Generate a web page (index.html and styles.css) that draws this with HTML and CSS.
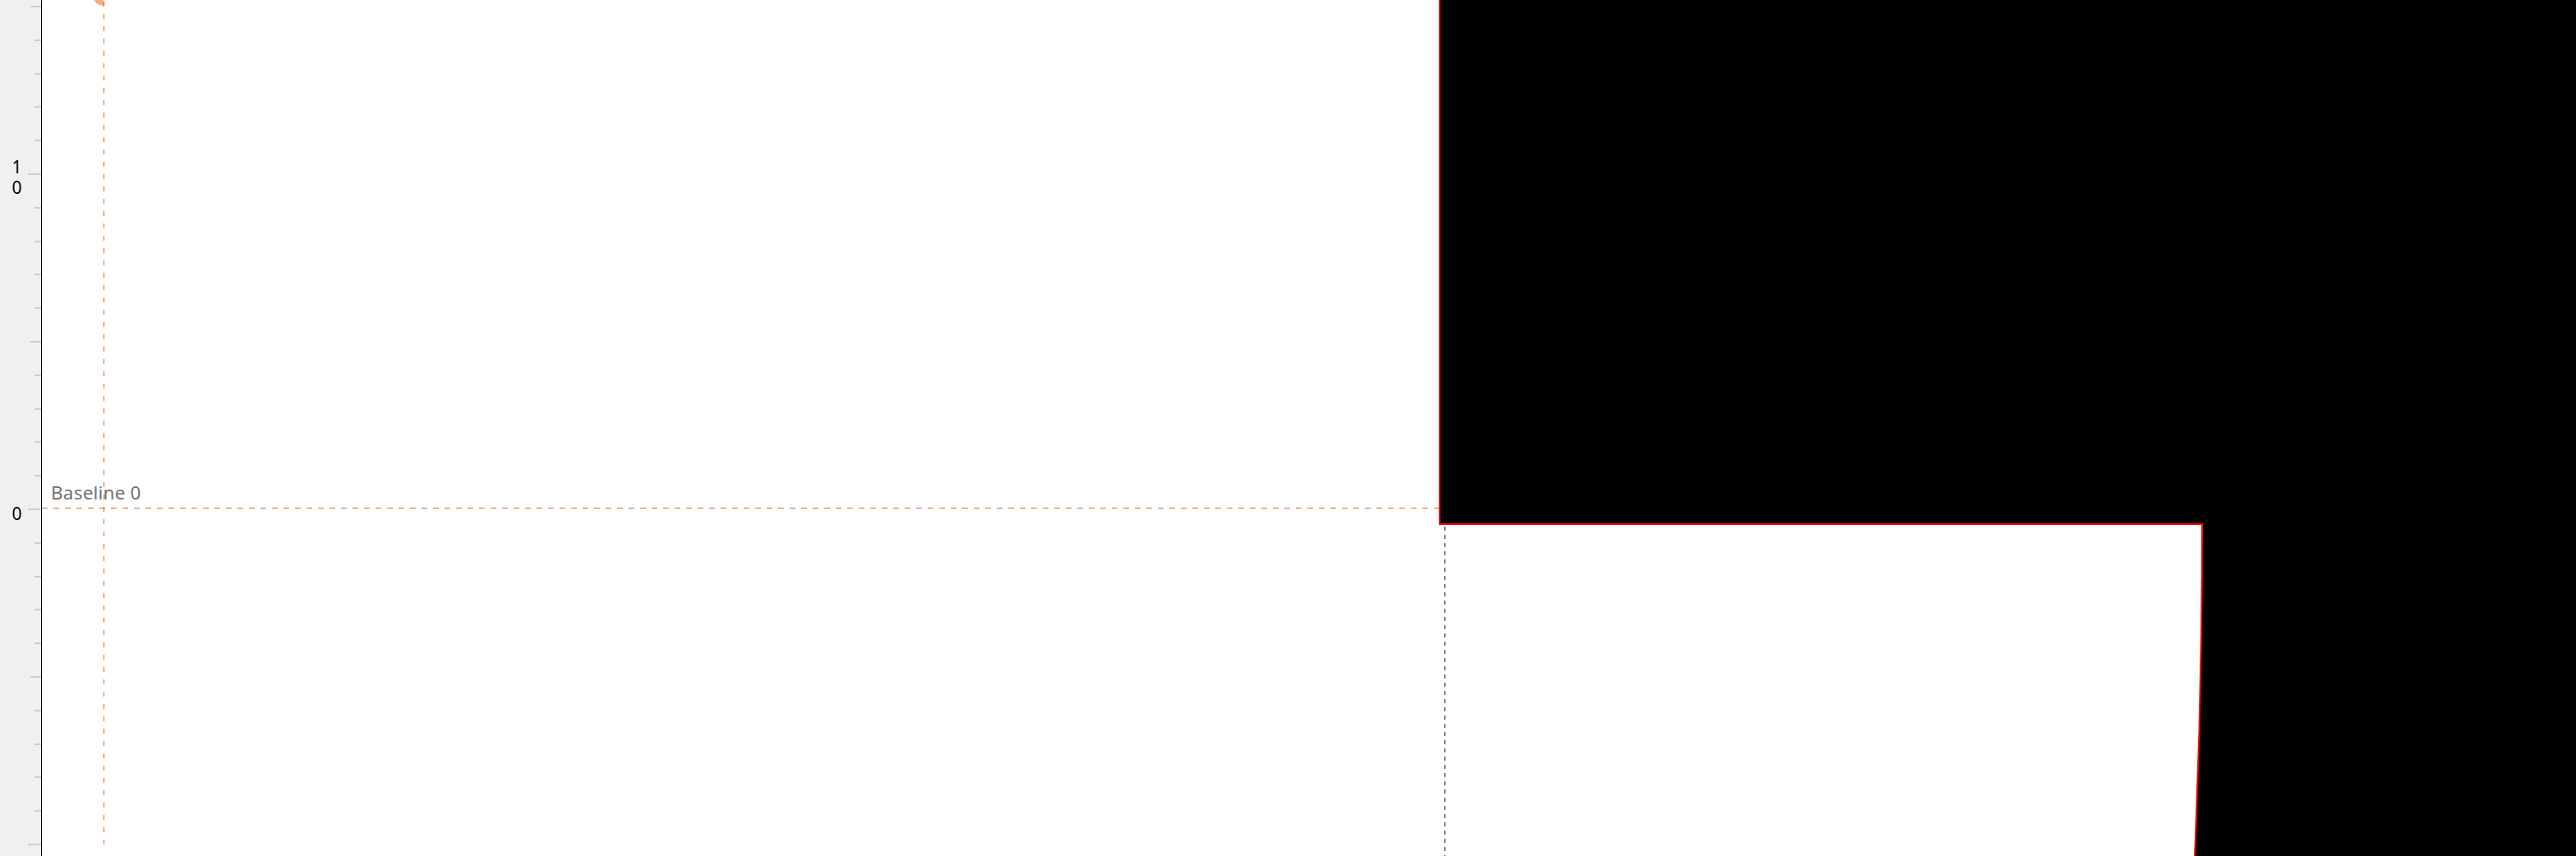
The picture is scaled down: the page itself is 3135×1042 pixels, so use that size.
FILE: index.html
```html
<!DOCTYPE html>
<html>
<head>
<meta charset="utf-8">
<link rel="stylesheet" href="styles.css">
</head>
<body>
<div class="app">
  <div class="ruler">
    <svg class="ruler-svg" width="50" height="1042" viewBox="0 0 50 1042">
      <g class="ticks">
        <line x1="37" y1="8" x2="50" y2="8"/>
        <line x1="42" y1="49" x2="50" y2="49"/>
        <line x1="42" y1="90" x2="50" y2="90"/>
        <line x1="42" y1="130" x2="50" y2="130"/>
        <line x1="42" y1="171" x2="50" y2="171"/>
        <line x1="34" y1="212" x2="50" y2="212"/>
        <line x1="42" y1="253" x2="50" y2="253"/>
        <line x1="42" y1="294" x2="50" y2="294"/>
        <line x1="42" y1="334" x2="50" y2="334"/>
        <line x1="42" y1="375" x2="50" y2="375"/>
        <line x1="37" y1="416" x2="50" y2="416"/>
        <line x1="42" y1="457" x2="50" y2="457"/>
        <line x1="42" y1="498" x2="50" y2="498"/>
        <line x1="42" y1="538" x2="50" y2="538"/>
        <line x1="42" y1="579" x2="50" y2="579"/>
        <line x1="34" y1="620" x2="50" y2="620"/>
        <line x1="42" y1="661" x2="50" y2="661"/>
        <line x1="42" y1="702" x2="50" y2="702"/>
        <line x1="42" y1="742" x2="50" y2="742"/>
        <line x1="42" y1="783" x2="50" y2="783"/>
        <line x1="37" y1="824" x2="50" y2="824"/>
        <line x1="42" y1="865" x2="50" y2="865"/>
        <line x1="42" y1="906" x2="50" y2="906"/>
        <line x1="42" y1="946" x2="50" y2="946"/>
        <line x1="42" y1="987" x2="50" y2="987"/>
        <line x1="34" y1="1028" x2="50" y2="1028"/>
      </g>
      <text class="ruler-label" x="20.5" y="211">1</text>
      <text class="ruler-label" x="20.5" y="236">0</text>
      <text class="ruler-label" x="20.5" y="633">0</text>
    </svg>
  </div>
  <div class="canvas">
    <svg class="glyph-svg" width="3084" height="1042" viewBox="51 0 3084 1042">
      <path class="glyph-fill" d="M1753 0 H3135 V1042 H2671 Q2680 840 2680 638 H1753 Z"/>
      <path class="glyph-outline" d="M1752 0 V638 H2680 Q2680 840 2671 1042"/>
      <line class="guide-orange guide-baseline" x1="51" y1="618.5" x2="1751" y2="618.5"/>
      <line class="guide-orange" x1="126.5" y1="2" x2="126.5" y2="1036"/>
      <line class="guide-black" x1="1758.5" y1="641" x2="1758.5" y2="1042"/>
      <path class="origin-dot" d="M126 0 V-6 A13 13 0 0 0 113 -6 A13 13 0 0 0 126 7 Z"/>
    </svg>
    <span class="baseline-label">Baseline 0</span>
  </div>
</div>
</body>
</html>
```

FILE: styles.css
```css
html, body {
  margin: 0;
  padding: 0;
  background: #ffffff;
  overflow: hidden;
}

.app {
  display: flex;
  width: 3135px;
  height: 1042px;
}

.ruler {
  flex: 0 0 50px;
  width: 50px;
  height: 1042px;
  background: #f0f0f0;
  border-right: 1px solid #000000;
}

.ruler-svg {
  display: block;
}

.ticks line {
  stroke: #bdbdbd;
  stroke-width: 1.4;
}

.ruler-label {
  font-family: "Noto Sans", "Open Sans", sans-serif;
  font-size: 21px;
  fill: #000000;
  text-anchor: middle;
}

.canvas {
  flex: 1 1 auto;
  position: relative;
  height: 1042px;
  background: #ffffff;
  overflow: hidden;
}

.glyph-svg {
  position: absolute;
  left: 0;
  top: 0;
  display: block;
}

.glyph-fill {
  fill: #000000;
}

.glyph-outline {
  fill: none;
  stroke: #ff0000;
  stroke-width: 2;
}

.guide-orange {
  stroke: #e8680a;
  stroke-width: 1;
  stroke-dasharray: 6 9;
}

.guide-baseline {
  stroke: #d86a1e;
  stroke-dasharray: 7 7;
}

.guide-black {
  stroke: #000000;
  stroke-width: 1;
  stroke-dasharray: 5 5;
}

.origin-dot {
  fill: #f2b183;
}

.baseline-label {
  position: absolute;
  left: 11px;
  top: 585px;
  font-family: "Noto Sans", "Open Sans", sans-serif;
  font-size: 22.5px;
  letter-spacing: 0.2px;
  line-height: 30px;
  color: #707070;
  white-space: nowrap;
}
```
